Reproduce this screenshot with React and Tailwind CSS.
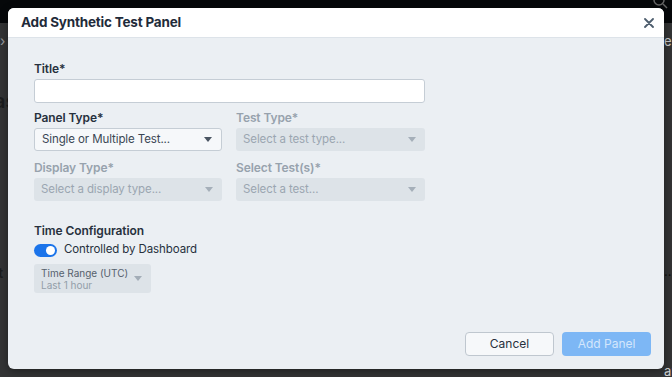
import React from "react";

const Caret = ({ className = "" }) => (
  <svg width="8" height="5" viewBox="0 0 8 5" className={className}>
    <path d="M0 0 L8 0 L4 5 Z" fill="currentColor" />
  </svg>
);

function Select({ text, disabled, className = "" }) {
  return (
    <div
      className={
        "flex items-center justify-between h-[23px] rounded-[3px] pl-[7px] pr-[9px] text-[11.5px] tracking-[-0.1px] " +
        (disabled
          ? "bg-[#dde3e8] text-[#9ba6b1] "
          : "bg-[#f6f8fa] border border-[#c5cdd5] text-[#3a4654] ") +
        className
      }
    >
      <span>{text}</span>
      <Caret className={disabled ? "text-[#a5afb9]" : "text-[#4a5562]"} />
    </div>
  );
}

function Label({ children, disabled }) {
  return (
    <div
      className={
        "text-[12px] font-semibold leading-[14px] mb-[3px] tracking-[-0.1px] " +
        (disabled ? "text-[#97a2ad]" : "text-[#27313d]")
      }
    >
      {children}
    </div>
  );
}

export default function App() {
  return (
    <div
      className="relative w-[672px] h-[377px] overflow-hidden bg-[#333435]"
      style={{ fontFamily: "Inter, 'Noto Sans', sans-serif" }}
    >
      <div className="h-[23px] bg-[#06080a]" />
      <div className="absolute left-[0px] top-[30px] text-[#9a9c9e] text-[14px]">›</div>
      <div className="absolute left-[-6px] top-[86px] text-[#1c1d1e] text-[20px] font-semibold">as</div>
      <div className="absolute left-[-2px] top-[262px] text-[#1c1d1e] text-[14px] font-bold">t</div>
      <div className="absolute left-[664px] top-[32px] text-[#c9cbcd] text-[13px]">e</div>
      <div className="absolute left-[664px] top-[262px] text-[#111] text-[13px]">..</div>
      <div className="absolute left-[664px] top-[362px] text-[#cfd1d3] text-[13px]">ar</div>
      <svg className="absolute left-[652px] top-[-7px]" width="16" height="16" viewBox="0 0 16 16">
        <circle cx="7" cy="7" r="5" fill="none" stroke="#666" strokeWidth="1.5" />
        <path d="M11 11 L15 15" stroke="#666" strokeWidth="1.5" />
      </svg>

      <div className="absolute left-[8px] top-[8px] w-[656px] h-[361px] rounded-[6px] overflow-hidden bg-[#ebeff3] flex flex-col shadow-[0_2px_8px_rgba(0,0,0,0.4)]">
        <div className="h-[30px] shrink-0 bg-white border-b border-[#dde3e9] flex items-center justify-between pl-[13px] pr-[10px]">
          <span className="text-[13.5px] font-bold text-[#1f2b3a] tracking-[-0.2px]">Add Synthetic Test Panel</span>
          <svg width="10" height="10" viewBox="0 0 10 10">
            <path d="M1 1 L9 9 M9 1 L1 9" stroke="#4d5d6d" strokeWidth="1.8" strokeLinecap="round" />
          </svg>
        </div>

        <div className="flex-1 flex flex-col pl-[26px] pt-[24px] pr-[13px] pb-[13px]">
          <div className="w-[391px]">
            <Label>Title*</Label>
            <div className="h-[24px] bg-white border border-[#c5cdd5] rounded-[3px]" />
          </div>

          <div className="grid grid-cols-[188px_189px] gap-x-[14px] gap-y-[10px] mt-[8px]">
            <div>
              <Label>Panel Type*</Label>
              <Select text="Single or Multiple Test..." />
            </div>
            <div>
              <Label disabled>Test Type*</Label>
              <Select text="Select a test type..." disabled />
            </div>
            <div>
              <Label disabled>Display Type*</Label>
              <Select text="Select a display type..." disabled />
            </div>
            <div>
              <Label disabled>Select Test(s)*</Label>
              <Select text="Select a test..." disabled />
            </div>
          </div>

          <div className="mt-[23px] text-[12px] font-semibold text-[#27313d] leading-[14px] tracking-[-0.1px]">Time Configuration</div>
          <div className="flex items-center mt-[5px] h-[14px]">
            <div className="w-[23px] h-[13px] rounded-full bg-[#1b74ea] flex items-center justify-end pr-[2px]">
              <div className="w-[9px] h-[9px] rounded-full bg-white" />
            </div>
            <span className="ml-[7px] text-[11.5px] text-[#27313d] tracking-[-0.1px]">Controlled by Dashboard</span>
          </div>
          <div className="mt-[7px] w-[117px] h-[29px] rounded-[3px] bg-[#dde3e8] flex items-center justify-between pl-[7px] pr-[9px]">
            <div className="flex flex-col leading-[12px]">
              <span className="text-[10px] text-[#56616d]">Time Range (UTC)</span>
              <span className="text-[10px] text-[#939ea9]">Last 1 hour</span>
            </div>
            <Caret className="text-[#a3adb7]" />
          </div>

          <div className="mt-auto flex justify-end gap-[8px]">
            <button className="w-[89px] h-[24px] bg-[#f6f8fa] border border-[#bfc7cf] rounded-[4px] text-[12px] text-[#27313d]">
              Cancel
            </button>
            <button className="w-[89px] h-[24px] bg-[#7db7f5] rounded-[4px] text-[12px] text-[#d3e6fc]">
              Add Panel
            </button>
          </div>
        </div>
      </div>
    </div>
  );
}
